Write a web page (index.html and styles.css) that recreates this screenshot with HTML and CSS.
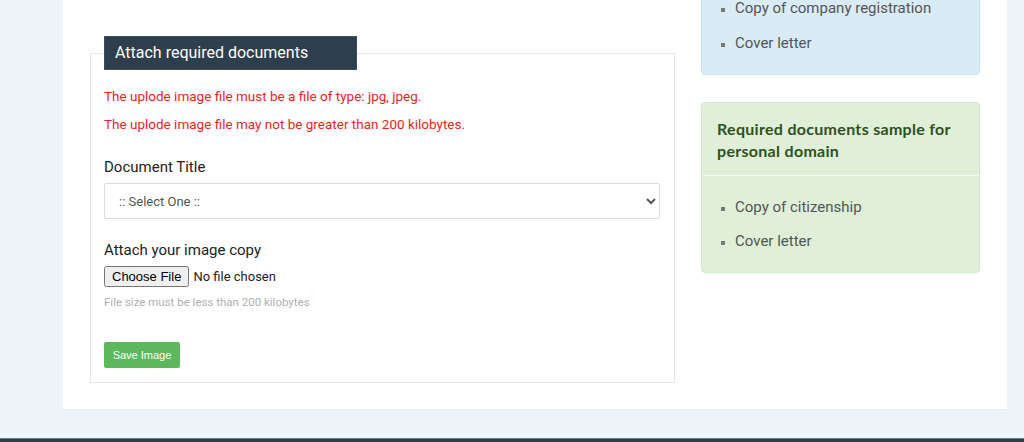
FILE: index.html
```html
<!DOCTYPE html>
<html lang="en">
<head>
    <meta charset="UTF-8">
    <meta name="viewport" content="width=device-width, initial-scale=1.0">
    <title>Domain Documents</title>
    <link rel="stylesheet" href="styles.css">
</head>
<body>
    <div class="page">
        <div class="content-box">
            <div class="main-col">
                <fieldset class="doc-fieldset">
                    <legend>Attach required documents</legend>
                    <p class="error">The uplode image file must be a file of type: jpg, jpeg.</p>
                    <p class="error">The uplode image file may not be greater than 200 kilobytes.</p>

                    <form class="doc-form">
                        <div class="form-group">
                            <label for="doc-title">Document Title</label>
                            <select id="doc-title" class="form-control">
                                <option>:: Select One ::</option>
                                <option>Copy of citizenship</option>
                                <option>Cover letter</option>
                            </select>
                        </div>
                        <div class="form-group">
                            <label for="doc-file">Attach your image copy</label>
                            <input type="file" id="doc-file" class="file-input">
                            <p class="help">File size must be less than 200 kilobytes</p>
                        </div>
                        <button type="submit" class="btn-save">Save Image</button>
                    </form>
                </fieldset>
            </div>

            <div class="side-col">
                <div class="panel panel-info">
                    <ul class="panel-list">
                        <li>Copy of company registration</li>
                        <li>Cover letter</li>
                    </ul>
                </div>

                <div class="panel panel-success">
                    <div class="panel-heading">Required documents sample for personal domain</div>
                    <ul class="panel-list">
                        <li>Copy of citizenship</li>
                        <li>Cover letter</li>
                    </ul>
                </div>
            </div>
        </div>
    </div>

    <footer class="footer"></footer>
</body>
</html>
```

FILE: styles.css
```css
* {
    margin: 0;
    padding: 0;
    box-sizing: border-box;
}

body {
    background-color: #eef3f7;
    font-family: Roboto, "Liberation Sans", sans-serif;
    color: #222;
    overflow: hidden;
}

.page {
    padding: 0 17px 28px 63px;
}

.content-box {
    background-color: #fff;
    border-bottom: 1px solid #e6ecf0;
    display: flex;
    gap: 26px;
    padding: 36px 27px 26px 27px;
}

.main-col {
    width: 585px;
}

/* Fieldset */
.doc-fieldset {
    border: 1px solid #e3e8ec;
    padding: 0 14px 14px 13px;
}

.doc-fieldset legend {
    background-color: #2d3e4c;
    color: #fff;
    font-size: 16px;
    line-height: 32px;
    padding: 0 10px;
    width: 253px;
    border: 1px solid #3c4e5c;
}

.error {
    color: #f21c1c;
    font-size: 13.5px;
    line-height: 20px;
    margin-bottom: 8px;
}

.doc-fieldset .error:first-of-type {
    margin-top: 16px;
}

.doc-form {
    margin-top: 23px;
}

.form-group {
    margin-bottom: 21px;
}

.form-group label {
    display: block;
    font-size: 15px;
    line-height: 20px;
    margin-bottom: 6px;
}

.form-control {
    width: 100%;
    height: 36px;
    border: 1px solid #dcdcdc;
    border-radius: 2px;
    background-color: #fff;
    color: #555;
    font-family: Roboto, "Liberation Sans", sans-serif;
    font-size: 13px;
    padding: 0 10px;
}

.file-input {
    font-family: Roboto, "Liberation Sans", sans-serif;
    font-size: 13px;
    color: #222;
}

.help {
    color: #b0b0b0;
    font-size: 11.5px;
    line-height: 16px;
    margin-top: 7px;
}

.btn-save {
    background-color: #5cb85c;
    color: #fff;
    border: none;
    border-radius: 2px;
    font-family: "Liberation Sans", Arial, sans-serif;
    font-size: 11px;
    height: 26px;
    width: 76px;
    margin-top: 11px;
    cursor: pointer;
}

.btn-save:hover {
    background-color: #4cae4c;
}

/* Side panels */
.side-col {
    width: 279px;
    display: flex;
    flex-direction: column;
    gap: 27px;
    margin-top: -60px;
}

.panel {
    border: 1px solid;
    border-radius: 4px;
}

.panel-info {
    background-color: #d9ebf5;
    border-color: #c9e4f1;
}

.panel-success {
    background-color: #dfefd8;
    border-color: #d4e8cb;
}

.panel-heading {
    font-family: "Century Gothic", Lato, sans-serif;
    font-weight: bold;
    font-size: 16px;
    letter-spacing: 0.3px;
    line-height: 22px;
    color: #2f5120;
    padding: 15px 15px 13px 15px;
    border-bottom: 1px solid #f2f8ef;
}

.panel-list {
    list-style-type: square;
    padding: 20px 15px 8px 33px;
    color: #555;
    font-size: 15px;
}

.panel-info .panel-list {
    padding-bottom: 7px;
}

.panel-list li {
    line-height: 22px;
    margin-bottom: 12px;
}

.panel-info .panel-list li {
    margin-bottom: 13px;
}

.panel-list li::marker {
    color: #777;
    font-size: 12px;
}

.footer {
    background-color: #2d3e4c;
    border-top: 1px solid #6f7d88;
    height: 30px;
}
```
